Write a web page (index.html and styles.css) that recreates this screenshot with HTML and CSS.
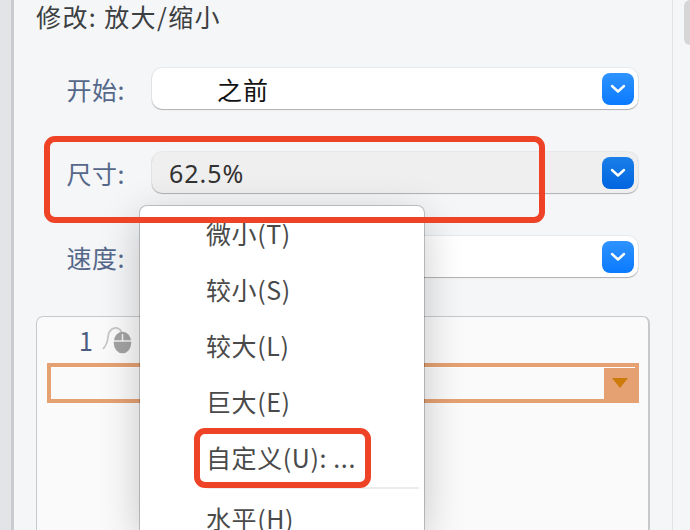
FILE: index.html
```html
<!DOCTYPE html>
<html lang="zh-CN">
<head>
    <meta charset="UTF-8">
    <meta name="viewport" content="width=device-width, initial-scale=1.0">
    <title>放大/缩小</title>
    <link rel="stylesheet" href="styles.css">
</head>
<body>
    <div class="strip"></div>
    <div class="panel">
        <div class="title">修改: 放大/缩小</div>
        <div class="rows">
            <div class="row">
                <div class="label">开始:</div>
                <div class="select">
                    <span class="value value-start">之前</span>
                    <span class="arrow"><svg width="16" height="10" viewBox="0 0 16 10"><path d="M2 2l6 5.500 6-5.500" fill="none" stroke="#fff" stroke-width="2.400" stroke-linecap="round" stroke-linejoin="round"/></svg></span>
                </div>
            </div>
            <div class="row">
                <div class="label">尺寸:</div>
                <div class="select select-open">
                    <span class="value value-size">62.5%</span>
                    <span class="arrow"><svg width="16" height="10" viewBox="0 0 16 10"><path d="M2 2l6 5.500 6-5.500" fill="none" stroke="#fff" stroke-width="2.400" stroke-linecap="round" stroke-linejoin="round"/></svg></span>
                </div>
            </div>
            <div class="row">
                <div class="label">速度:</div>
                <div class="select">
                    <span class="value"></span>
                    <span class="arrow"><svg width="16" height="10" viewBox="0 0 16 10"><path d="M2 2l6 5.500 6-5.500" fill="none" stroke="#fff" stroke-width="2.400" stroke-linecap="round" stroke-linejoin="round"/></svg></span>
                </div>
            </div>
        </div>
        <div class="trigger-box">
            <div class="trigger-head">
                <span class="trigger-num">1</span>
                <svg class="mouse" width="30" height="30" viewBox="0 0 30 30">
                    <path d="M1 23C4 20 5.500 16 6 11 6.500 6 9 2.500 13 2 16 1.700 18 3 19.500 6" fill="none" stroke="#c8c8c8" stroke-width="1.800"/>
                    <ellipse cx="20.500" cy="16.500" rx="8.800" ry="10.800" fill="#a3a3a3"/>
                    <path d="M12 15H29M20.500 8V15" fill="none" stroke="#f4f4f4" stroke-width="1.500"/>
                </svg>
            </div>
            <div class="combo">
                <div class="combo-field"></div>
                <div class="combo-btn"><span class="combo-tri"></span></div>
            </div>
        </div>
    </div>
    <div class="scroll-track"><div class="scroll-thumb"></div></div>

    <div class="menu">
        <div class="menu-item">微小(T)</div>
        <div class="menu-item">较小(S)</div>
        <div class="menu-item">较大(L)</div>
        <div class="menu-item">巨大(E)</div>
        <div class="menu-item">自定义(U): ...</div>
        <div class="menu-sep"></div>
        <div class="menu-item">水平(H)</div>
    </div>

    <div class="mark mark-size"></div>
    <div class="mark mark-custom"></div>
</body>
</html>
```

FILE: styles.css
```css
html, body {
    margin: 0;
    height: 530px;
    overflow: hidden;
}
body {
    display: flex;
    position: relative;
    font-family: "Noto Sans CJK SC", "Liberation Sans", sans-serif;
    background-color: #f5f6f8;
}
.strip {
    width: 11px;
    background-color: #e2e4e8;
    border-right: 3px solid #cacbd0;
}
.panel {
    width: 659px;
    height: 530px;
    box-sizing: border-box;
    padding-left: 22px;
    background-color: #f5f6f8;
    border-right: 1px solid #e2e3e6;
}
.title {
    height: 68px;
    line-height: 33px;
    font-size: 25px;
    letter-spacing: 1.4px;
    color: #3c3f42;
}
.rows {
    display: flex;
    flex-direction: column;
    gap: 43px;
    width: 602px;
}
.row {
    display: flex;
    align-items: center;
    gap: 27px;
}
.label {
    width: 89px;
    height: 41px;
    text-align: right;
    font-size: 25px;
    letter-spacing: 0.5px;
    line-height: 43px;
    color: #56688a;
}
.select {
    flex: 1;
    height: 41px;
    display: flex;
    align-items: center;
    justify-content: space-between;
    background-color: #fff;
    border-radius: 10px;
    box-shadow: 0 0 0 1px rgba(0, 0, 0, 0.05), 0 1px 1px rgba(0, 0, 0, 0.25);
}
.select-open {
    background-color: #efefef;
}
.value {
    font-size: 25px;
    color: #111;
}
.value-start {
    padding-left: 65px;
    letter-spacing: 1px;
}
.value-size {
    padding-left: 17px;
    font-family: "Noto Sans", sans-serif;
    letter-spacing: 1px;
    color: #333;
}
.arrow {
    width: 32px;
    height: 32px;
    margin-right: 4px;
    display: flex;
    align-items: center;
    justify-content: center;
    border-radius: 8px;
    background: linear-gradient(#2f93ff, #0a7aff);
}
.select-open .arrow {
    background: linear-gradient(#1a7fe8, #0064e0);
}
.trigger-box {
    margin-top: 39px;
    width: 614px;
    height: 214px;
    box-sizing: border-box;
    padding-left: 10px;
    background-color: #fafafb;
    border: 1px solid #c8c9cc;
    border-right-width: 2px;
    border-bottom: none;
    border-radius: 7px 7px 0 0;
}
.trigger-head {
    height: 46px;
    display: flex;
    align-items: center;
    padding-left: 32px;
}
.trigger-num {
    font-size: 25px;
    color: #4a5d80;
}
.mouse {
    margin-left: 9px;
    margin-top: 2px;
}
.combo {
    width: 592px;
    height: 40px;
    display: flex;
    box-sizing: border-box;
    border: 4px solid #e5a172;
    background-color: #fff;
}
.combo-field {
    flex: 1;
    margin-top: 1px;
    background-color: #fafafb;
}
.combo-btn {
    width: 35px;
    height: 35px;
    margin-top: 1px;
    margin-right: -4px;
    display: flex;
    justify-content: center;
    padding: 10px 3px 0 0;
    box-sizing: border-box;
    background-color: #e5a172;
}
.combo-tri {
    width: 0;
    height: 0;
    border-left: 8px solid transparent;
    border-right: 8px solid transparent;
    border-top: 10px solid #cc7a0a;
}
.scroll-track {
    flex: 1;
    display: flex;
    justify-content: flex-end;
    background-color: #f5f6f8;
}
.scroll-thumb {
    width: 6px;
    height: 45px;
    background-color: #d6d6d7;
    border-radius: 6px 0 0 6px;
}
.menu {
    position: absolute;
    left: 140px;
    top: 206px;
    width: 284px;
    height: 324px;
    overflow: hidden;
    background-color: #fff;
    border-radius: 7px 7px 0 0;
    box-shadow: 0 0 0 1px rgba(0, 0, 0, 0.2), 0 10px 40px rgba(0, 0, 0, 0.22);
}
.menu-item {
    height: 56px;
    line-height: 54px;
    padding-left: 66px;
    font-size: 25px;
    letter-spacing: 0.6px;
    color: #4a4a4a;
}
.menu-sep {
    height: 2px;
    margin: 1px 5px 2px 67px;
    background-color: #ececec;
}
.mark {
    position: absolute;
    box-sizing: border-box;
    border: 6px solid #ee4327;
    border-radius: 11px;
}
.mark-size {
    left: 44px;
    top: 136px;
    width: 501px;
    height: 87px;
}
.mark-custom {
    left: 194px;
    top: 428px;
    width: 177px;
    height: 60px;
}
```
